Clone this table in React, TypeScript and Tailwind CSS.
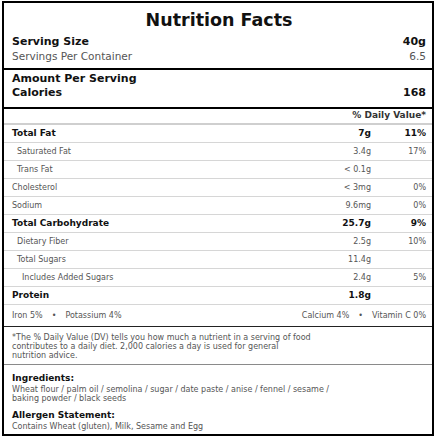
import React from "react";

interface Nutrient {
  name: string;
  amount: string;
  dv?: string;
  bold?: boolean;
  indent?: 0 | 1 | 2;
}

const nutrients: Nutrient[] = [
  { name: "Total Fat", amount: "7g", dv: "11%", bold: true },
  { name: "Saturated Fat", amount: "3.4g", dv: "17%", indent: 1 },
  { name: "Trans Fat", amount: "< 0.1g", indent: 1 },
  { name: "Cholesterol", amount: "< 3mg", dv: "0%" },
  { name: "Sodium", amount: "9.6mg", dv: "0%" },
  { name: "Total Carbohydrate", amount: "25.7g", dv: "9%", bold: true },
  { name: "Dietary Fiber", amount: "2.5g", dv: "10%", indent: 1 },
  { name: "Total Sugars", amount: "11.4g", indent: 1 },
  { name: "Includes Added Sugars", amount: "2.4g", dv: "5%", indent: 2 },
  { name: "Protein", amount: "1.8g", bold: true },
];

export default function App() {
  return (
    <div className="w-[436px] h-[436px] overflow-hidden bg-white font-['DejaVu_Sans',sans-serif]">
      <div className="mx-[2px] mt-[1px] border-2 border-black">
        <div className="pt-[7px] pl-[8px] pr-[6px]">
          <h1 className="text-[17.5px] leading-[20px] font-bold text-center text-[#111]">Nutrition Facts</h1>
          <div className="mt-[4px] flex justify-between text-[11px] leading-[15px] font-bold text-[#111]">
            <span>Serving Size</span>
            <span>40g</span>
          </div>
          <div className="flex justify-between text-[10.5px] leading-[15px] text-[#555]">
            <span>Servings Per Container</span>
            <span>6.5</span>
          </div>
        </div>

        <div className="mt-[4px] h-[2px] bg-black" />

        <div className="pt-[2px] pb-[7px] pl-[8px] pr-[6px] text-[11px] leading-[14px] font-bold text-[#111]">
          <p>Amount Per Serving</p>
          <div className="flex justify-between">
            <span>Calories</span>
            <span>168</span>
          </div>
        </div>

        <div className="h-[2px] bg-black" />

        <div className="h-[16px] flex items-center justify-end pr-[6px] text-[9px] font-bold text-[#333] border-b-2 border-[#cfcfcf]">
          % Daily Value*
        </div>

        {nutrients.map((n) => (
          <NutrientRow key={n.name} item={n} />
        ))}

        <div className="h-[22px] flex items-center justify-between pl-[8px] pr-[6px] text-[8px] text-[#555] border-b border-[#222]">
          <div className="flex items-center gap-[9px]">
            <span>Iron 5%</span>
            <span>•</span>
            <span>Potassium 4%</span>
          </div>
          <div className="flex items-center gap-[9px]">
            <span>Calcium 4%</span>
            <span>•</span>
            <span>Vitamin C 0%</span>
          </div>
        </div>

        <div className="pt-[6px] pb-[4px] pl-[8px] pr-[6px] border-b border-[#8a8a8a]">
          <p className="text-[8px] leading-[9px] text-[#555]">
            *The % Daily Value (DV) tells you how much a nutrient in a serving of food
            <br />
            contributes to a daily diet. 2,000 calories a day is used for general
            <br />
            nutrition advice.
          </p>
        </div>

        <div className="pt-[7px] pb-[3px] pl-[8px] pr-[6px]">
          <p className="text-[9px] leading-[12px] font-bold text-[#111]">Ingredients:</p>
          <p className="mt-[1px] max-w-[340px] text-[8px] leading-[9px] text-[#555]">
            Wheat flour / palm oil / semolina / sugar / date paste / anise / fennel / sesame / baking powder / black seeds
          </p>
          <p className="mt-[6px] text-[9px] leading-[12px] font-bold text-[#111]">Allergen Statement:</p>
          <p className="mt-[1px] text-[8px] leading-[9px] text-[#555]">Contains Wheat (gluten), Milk, Sesame and Egg</p>
        </div>
      </div>
    </div>
  );
}

function NutrientRow({ item }: { item: Nutrient }) {
  const pad = item.indent === 2 ? "pl-[18px]" : item.indent === 1 ? "pl-[13px]" : "pl-[8px]";
  const tone = item.bold ? "font-bold text-[9px] text-[#111]" : "text-[8px] text-[#555]";
  return (
    <div className={`h-[18px] grid grid-cols-[1fr_70px_55px] items-center pr-[6px] border-b border-[#d6d6d6] ${pad} ${tone}`}>
      <span>{item.name}</span>
      <span className="text-right">{item.amount}</span>
      <span className="text-right">{item.dv ?? ""}</span>
    </div>
  );
}
